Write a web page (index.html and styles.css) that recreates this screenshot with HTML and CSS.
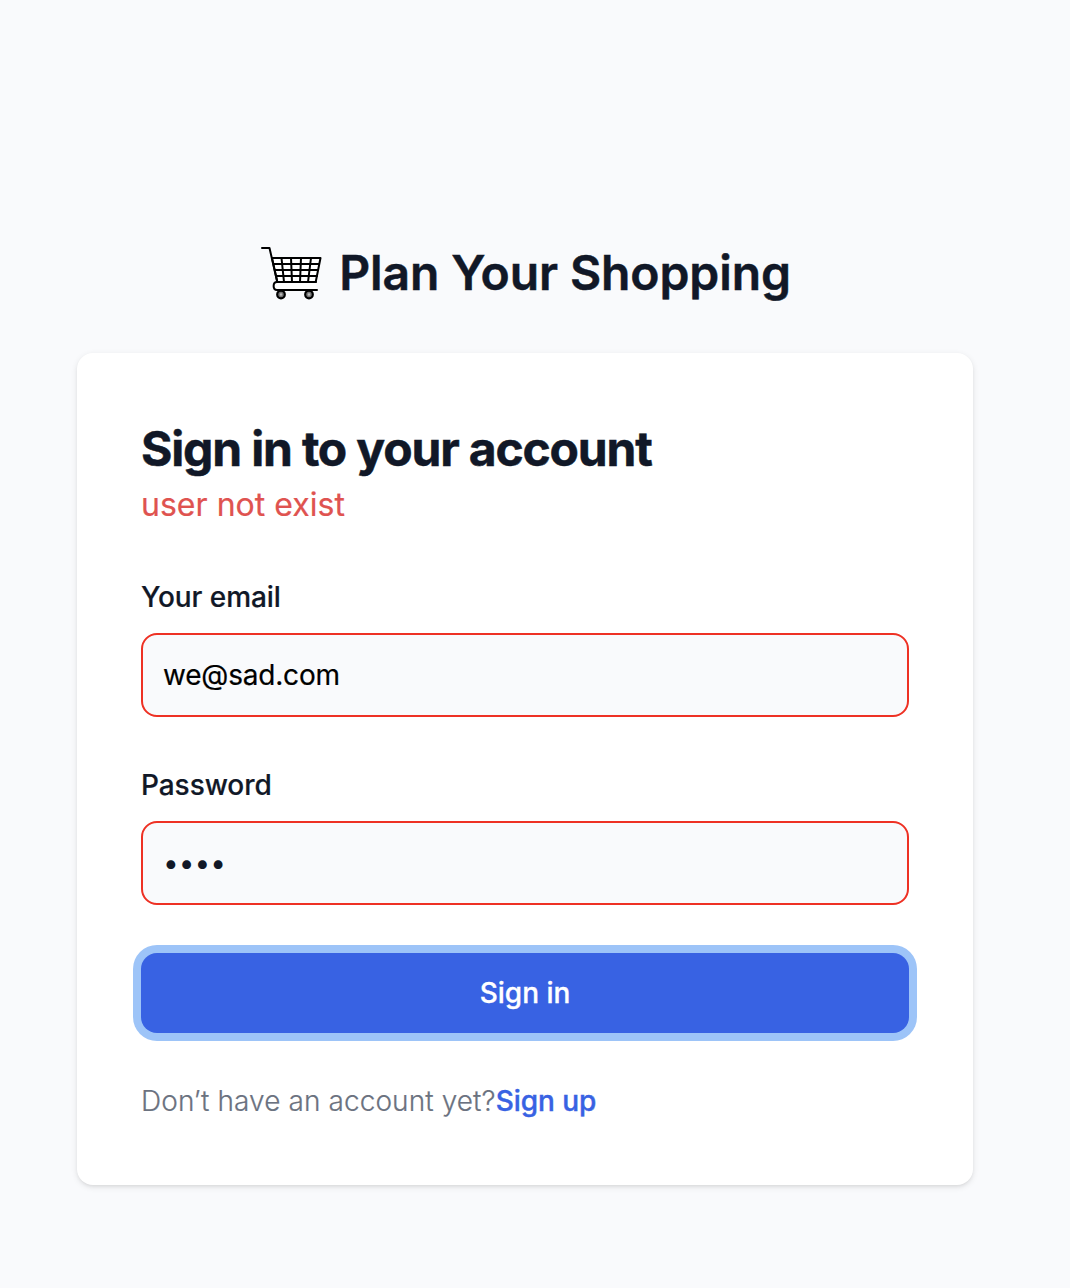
FILE: index.html
```html
<!DOCTYPE html>
<html lang="en">
<head>
<meta charset="utf-8">
<title>Plan Your Shopping</title>
<link rel="stylesheet" href="styles.css">
</head>
<body>
<main class="page">
  <a class="brand">
    <svg class="brand-icon" viewBox="0 0 64 64" fill="none" stroke="#000" stroke-width="2" stroke-linecap="round" stroke-linejoin="round">
      <path fill="#fff" d="M13 17H61.5L56.7 41H18.3Z"/>
      <path d="M3 7H10.5L18.3 41M14.5 23H60M15.8 29H59M17 35H58M22.5 17L25 41M32 17L33 41M42 17L41 41M52 17L49 41"/>
      <path fill="#fff" d="M57 41H18C13.5 41 13.5 49 18 49H58"/>
      <g stroke-width="2.2">
        <circle cx="22" cy="53.5" r="3.8" fill="#777"/>
        <circle cx="50" cy="53.5" r="3.8" fill="#777"/>
      </g>
      <g fill="#bbb" stroke="none">
        <circle cx="22" cy="53.5" r="1.2"/>
        <circle cx="50" cy="53.5" r="1.2"/>
      </g>
    </svg>
    <span class="brand-name">Plan Your Shopping</span>
  </a>
  <section class="card">
    <header class="card-header">
      <h1 class="title">Sign in to your account</h1>
      <p class="error">user not exist</p>
    </header>
    <form class="form">
      <div class="field">
        <label class="label" for="email">Your email</label>
        <input class="input input-email" id="email" type="text" value="we@sad.com">
      </div>
      <div class="field">
        <label class="label" for="password">Password</label>
        <input class="input" id="password" type="password" value="1234">
      </div>
      <button class="submit" type="button">Sign in</button>
      <p class="signup">Don’t have an account yet?<a class="signup-link">Sign up</a></p>
    </form>
  </section>
</main>
</body>
</html>
```
FILE: styles.css
```css
* { box-sizing: border-box; margin: 0; }
body {
  background: #f9fafc;
  color: #111827;
  font-family: Inter, "Liberation Sans", sans-serif;
}
.page {
  width: 1050px;
  height: 1288px;
  padding-top: 241px;
  display: flex;
  flex-direction: column;
  align-items: center;
}
.brand {
  display: flex;
  align-items: center;
  gap: 16px;
  height: 64px;
  margin-bottom: 48px;
}
.brand-icon { width: 64px; height: 64px; }
.brand-name {
  font-size: 48px;
  line-height: 64px;
  font-weight: 600;
  letter-spacing: -.1px;
  white-space: nowrap;
  -webkit-text-stroke: .5px currentColor;
}
.card {
  width: 896px;
  padding: 64px;
  background: #fff;
  border-radius: 16px;
  box-shadow: 0 2px 6px rgba(0, 0, 0, .1), 0 2px 4px -2px rgba(0, 0, 0, .1);
}
.title {
  font-size: 48px;
  line-height: 64px;
  font-weight: 700;
  letter-spacing: -1.17px;
  -webkit-text-stroke: .5px currentColor;
}
.error { font-size: 32px; line-height: 48px; color: #df5350; letter-spacing: .03px; -webkit-text-stroke: .2px currentColor; }
.form { display: flex; flex-direction: column; gap: 48px; margin-top: 48px; }
.field { display: flex; flex-direction: column; gap: 16px; }
.label { font-size: 28px; line-height: 40px; font-weight: 500; letter-spacing: -.06px; -webkit-text-stroke: .2px currentColor; }
.input {
  width: 100%;
  height: 84px;
  padding: 20px;
  border: 2px solid #ee3124;
  border-radius: 16px;
  background: #f9fafc;
  color: #111827;
  font: 400 28px/40px Inter, "Liberation Sans", sans-serif;
  outline: none;
}
.input-email { color: #000; letter-spacing: -.2px; -webkit-text-stroke: .2px currentColor; }
.submit {
  height: 80px;
  border: 0;
  border-radius: 16px;
  background: #3862e3;
  box-shadow: 0 0 0 8px #9dc4f8;
  color: #fff;
  font: 500 28px/40px Inter, "Liberation Sans", sans-serif;
  -webkit-text-stroke: .3px currentColor;
}
.signup {
  font-size: 28px;
  line-height: 40px;
  font-weight: 300;
  color: #6b7280;
  letter-spacing: .09px;
  -webkit-text-stroke: .2px currentColor;
}
.signup-link { font-weight: 500; color: #3862e3; letter-spacing: -.05px; -webkit-text-stroke: .4px currentColor; }
```
